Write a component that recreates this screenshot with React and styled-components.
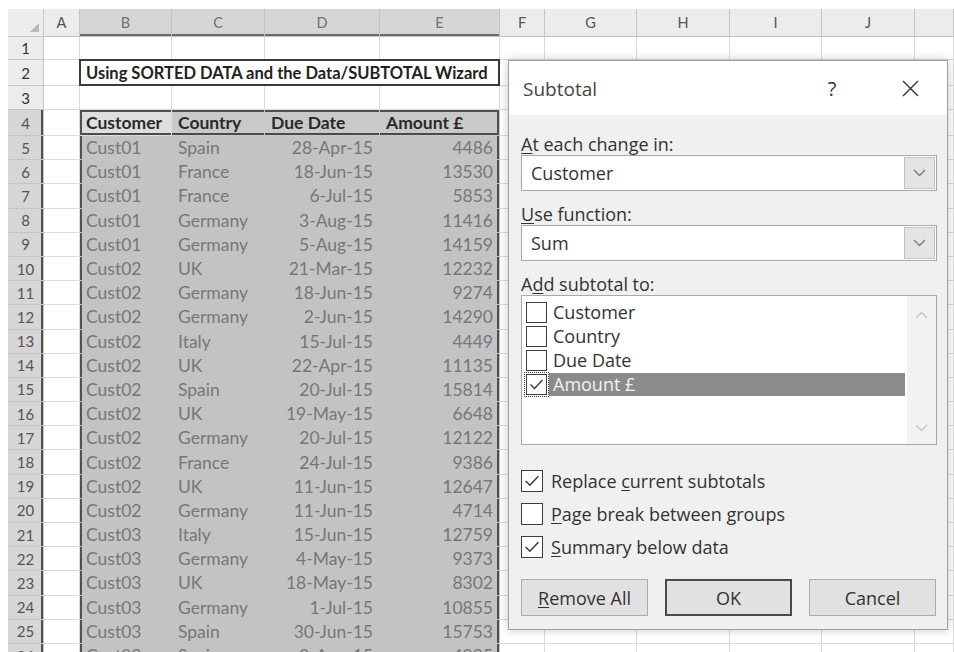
import React from "react";
import styled, { createGlobalStyle } from "styled-components";

const GlobalStyle = createGlobalStyle`
  html, body {
    margin: 0;
    padding: 0;
    background: #fff;
  }
  body {
    width: 954px;
    height: 652px;
    overflow: hidden;
  }
`;

const LETTERS = ["A", "B", "C", "D", "E", "F", "G", "H", "I", "J"];

const ROWS = [
  ["Cust01", "Spain", "28-Apr-15", "4486"],
  ["Cust01", "France", "18-Jun-15", "13530"],
  ["Cust01", "France", "6-Jul-15", "5853"],
  ["Cust01", "Germany", "3-Aug-15", "11416"],
  ["Cust01", "Germany", "5-Aug-15", "14159"],
  ["Cust02", "UK", "21-Mar-15", "12232"],
  ["Cust02", "Germany", "18-Jun-15", "9274"],
  ["Cust02", "Germany", "2-Jun-15", "14290"],
  ["Cust02", "Italy", "15-Jul-15", "4449"],
  ["Cust02", "UK", "22-Apr-15", "11135"],
  ["Cust02", "Spain", "20-Jul-15", "15814"],
  ["Cust02", "UK", "19-May-15", "6648"],
  ["Cust02", "Germany", "20-Jul-15", "12122"],
  ["Cust02", "France", "24-Jul-15", "9386"],
  ["Cust02", "UK", "11-Jun-15", "12647"],
  ["Cust02", "Germany", "11-Jun-15", "4714"],
  ["Cust03", "Italy", "15-Jun-15", "12759"],
  ["Cust03", "Germany", "4-May-15", "9373"],
  ["Cust03", "UK", "18-May-15", "8302"],
  ["Cust03", "Germany", "1-Jul-15", "10855"],
  ["Cust03", "Spain", "30-Jun-15", "15753"],
  ["Cust03", "Spain", "3-Aug-15", "4995"],
];

const HEAD = ["Customer", "Country", "Due Date", "Amount £"];
const EDGE = "#505050";

const Page = styled.div`
  position: relative;
  width: 954px;
  height: 652px;
  overflow: hidden;
  padding: 9px 0 0 8px;
  box-sizing: border-box;
  background: #fff;
`;

const Sheet = styled.div`
  display: grid;
  grid-template-columns: 36px 36px 92px 93px 115px 120px 45px 92px 93px 92px 93px 1fr;
  grid-template-rows: 28px 23px 26px 24px 26px repeat(22, 24.2px);
  font-family: Lato, "Liberation Sans", sans-serif;
`;

const Cell = styled.div`
  box-sizing: border-box;
  border-right: 1px solid #dadada;
  border-bottom: 1px solid #dadada;
  overflow: hidden;
  white-space: nowrap;
`;

const Corner = styled(Cell)`
  background: #ededed;
  border-color: #c8c8c8;
  display: flex;
  align-items: flex-end;
  justify-content: flex-end;
  padding: 0 4px 4px 0;
`;

const ColHead = styled(Cell)`
  background: ${(p) => (p.$sel ? "#d6d6d6" : "#ececec")};
  border-color: #c4c4c4;
  box-shadow: ${(p) => (p.$sel ? `inset 0 -2px 0 #6a6a6a` : "none")};
  color: ${(p) => (p.$sel ? "#707070" : "#555")};
  font-size: 14.5px;
  display: flex;
  align-items: center;
  justify-content: center;
`;

const RowHead = styled(Cell)`
  background: ${(p) => (p.$sel ? "#d6d6d6" : "#ececec")};
  border-color: #c4c4c4;
  box-shadow: ${(p) => (p.$sel ? `inset -2px 0 0 ${EDGE}` : "none")};
  color: ${(p) => (p.$sel ? "#555" : "#333")};
  font-size: 15px;
  display: flex;
  align-items: center;
  justify-content: center;
`;

const TitleCell = styled(Cell)`
  grid-column: span 4;
  border: 2px solid #3a3a3a;
  margin: -1px 0 0 -1px;
  color: #222;
  font-weight: 700;
  font-size: 16.5px;
  display: flex;
  align-items: center;
  padding-left: 5px;
`;

const edgeShadow = (p) => {
  const s = [];
  if (p.$first) s.push(`inset 2px 0 0 ${EDGE}`);
  if (p.$last) s.push(`inset -2px 0 0 ${EDGE}`);
  if (p.$head) s.push(`inset 0 2px 0 ${EDGE}`, `inset 0 -2px 0 #4a4a4a`);
  return s.length ? s.join(", ") : "none";
};

const blockFill = (p) => (p.$active ? "#dedede" : p.$head ? "#c9c9c9" : "#c3c3c3");

const BlockCell = styled(Cell)`
  background: ${blockFill};
  border-color: ${blockFill};
  box-shadow: ${edgeShadow};
  color: ${(p) => (p.$head ? "#2a2a2a" : "#777")};
  font-weight: ${(p) => (p.$head ? 700 : 400)};
  font-size: 17.5px;
  display: flex;
  align-items: center;
  justify-content: ${(p) => (p.$right ? "flex-end" : "flex-start")};
  padding: ${(p) => (p.$right ? "0 6px 0 0" : "0 0 0 6px")};
`;

const Dialog = styled.div`
  position: absolute;
  left: 508px;
  top: 60px;
  width: 440px;
  height: 570px;
  box-sizing: border-box;
  border: 1px solid #a0a0a0;
  background: #f0f0f0;
  box-shadow: 0 0 9px rgba(0, 0, 0, 0.22);
  display: flex;
  flex-direction: column;
  font-family: "Open Sans", "Noto Sans", sans-serif;
  color: #333;
`;

const TitleBar = styled.div`
  height: 54px;
  background: #fff;
  display: flex;
  align-items: center;
  padding-left: 14px;
`;

const Title = styled.div`
  flex: 1;
  font-size: 19px;
  color: #444;
  padding-top: 1px;
`;

const Help = styled.div`
  width: 30px;
  text-align: center;
  font-size: 20px;
  color: #333;
  margin-right: 40px;
`;

const Close = styled.div`
  width: 46px;
  margin-right: 14px;
  display: flex;
  justify-content: center;
`;

const Body = styled.div`
  flex: 1;
  display: flex;
  flex-direction: column;
  padding: 18px 10px 0 12px;
`;

const Label = styled.div`
  font-size: 18px;
  line-height: 22px;
  margin-top: ${(p) => (p.$first ? 0 : 12)}px;
`;

const Key = styled.span`
  text-decoration: underline;
  text-underline-offset: 2px;
`;

const Select = styled.div`
  height: 36px;
  box-sizing: border-box;
  display: flex;
  background: #fff;
  border: 1px solid #a9a9a9;
`;

const SelectValue = styled.div`
  flex: 1;
  padding-left: 9px;
  font-size: 18px;
  line-height: 34px;
`;

const SelectArrow = styled.div`
  width: 29px;
  margin: 1px;
  background: #e4e4e4;
  border: 1px solid #c2c2c2;
  display: flex;
  align-items: center;
  justify-content: center;
`;

const ListBox = styled.div`
  height: 150px;
  box-sizing: border-box;
  background: #fff;
  border: 1px solid #a9a9a9;
  display: flex;
`;

const ListItems = styled.div`
  flex: 1;
  padding: 4px 2px 0 4px;
`;

const ListRow = styled.div`
  height: 24px;
  display: flex;
  align-items: center;
`;

const ItemText = styled.div`
  flex: 1;
  margin-left: 2px;
  padding-left: 4px;
  font-size: 18px;
  line-height: 23px;
  background: ${(p) => (p.$selected ? "#8b8b8b" : "transparent")};
  color: ${(p) => (p.$selected ? "#f2f2f2" : "#333")};
`;

const ScrollTrack = styled.div`
  width: 29px;
  background: #f2f2f2;
  display: flex;
  flex-direction: column;
  justify-content: space-between;
  align-items: center;
  padding: 15px 0 12px;
`;

const Box = styled.span`
  width: ${(p) => p.$size}px;
  height: ${(p) => p.$size}px;
  box-sizing: border-box;
  flex: none;
  background: #fff;
  border: 1px solid #3c3c3c;
  outline: ${(p) => (p.$focus ? "1px dotted #333" : "none")};
  outline-offset: 1px;
  display: flex;
  align-items: center;
  justify-content: center;
`;

const Options = styled.div`
  margin-top: 19px;
  display: flex;
  flex-direction: column;
`;

const OptionRow = styled.div`
  height: 33px;
  display: flex;
  align-items: center;
  gap: 8px;
  font-size: 18px;
`;

const Buttons = styled.div`
  margin-top: 16px;
  display: flex;
  justify-content: space-between;
  padding-right: 1px;
`;

const Button = styled.div`
  width: 127px;
  height: 37px;
  box-sizing: border-box;
  background: #e1e1e1;
  border: ${(p) => (p.$default ? "2px solid #4a4a4a" : "1px solid #adadad")};
  display: flex;
  align-items: center;
  justify-content: center;
  font-size: 18px;
  color: #333;
`;

const Check = ({ on, size = 21, focus }) => (
  <Box $size={size} $focus={focus}>
    {on && (
      <svg width={size - 4} height={size - 4} viewBox="0 0 17 17">
        <path d="M2.5 8.5 L6.5 12.5 L14.5 4" fill="none" stroke="#3a3a3a" strokeWidth="1.4" />
      </svg>
    )}
  </Box>
);

const Chevron = ({ up, color = "#777" }) => (
  <svg width="13" height="8" viewBox="0 0 13 8">
    <path d={up ? "M1 7 L6.5 1.5 L12 7" : "M1 1 L6.5 6.5 L12 1"} fill="none" stroke={color} strokeWidth="1.3" />
  </svg>
);

const plainRow = (r, from) => {
  const out = [];
  for (let c = from; c <= 11; c++) out.push(<Cell key={`${r}-${c}`} />);
  return out;
};

const SubtotalDialog = () => (
  <Dialog>
    <TitleBar>
      <Title>Subtotal</Title>
      <Help>?</Help>
      <Close>
        <svg width="17" height="17" viewBox="0 0 17 17">
          <path d="M1 1 L16 16 M16 1 L1 16" stroke="#333" strokeWidth="1.4" />
        </svg>
      </Close>
    </TitleBar>
    <Body>
      <Label $first>
        <Key>A</Key>t each change in:
      </Label>
      <Select>
        <SelectValue>Customer</SelectValue>
        <SelectArrow>
          <Chevron />
        </SelectArrow>
      </Select>
      <Label>
        <Key>U</Key>se function:
      </Label>
      <Select>
        <SelectValue>Sum</SelectValue>
        <SelectArrow>
          <Chevron />
        </SelectArrow>
      </Select>
      <Label>
        A<Key>d</Key>d subtotal to:
      </Label>
      <ListBox>
        <ListItems>
          {HEAD.map((h, i) => (
            <ListRow key={h}>
              <Check on={i === 3} focus={i === 3} />
              <ItemText $selected={i === 3}>{h}</ItemText>
            </ListRow>
          ))}
        </ListItems>
        <ScrollTrack>
          <Chevron up color="#c4c4c4" />
          <Chevron color="#c4c4c4" />
        </ScrollTrack>
      </ListBox>
      <Options>
        <OptionRow>
          <Check on size={22} />
          <span>
            Replace <Key>c</Key>urrent subtotals
          </span>
        </OptionRow>
        <OptionRow>
          <Check size={22} />
          <span>
            <Key>P</Key>age break between groups
          </span>
        </OptionRow>
        <OptionRow>
          <Check on size={22} />
          <span>
            <Key>S</Key>ummary below data
          </span>
        </OptionRow>
      </Options>
      <Buttons>
        <Button>
          <span>
            <Key>R</Key>emove All
          </span>
        </Button>
        <Button $default>OK</Button>
        <Button>Cancel</Button>
      </Buttons>
    </Body>
  </Dialog>
);

const App = () => {
  const cells = [];

  // column letters
  cells.push(
    <Corner key="corner">
      <svg width="9" height="9" viewBox="0 0 9 9">
        <path d="M9 0 L9 9 L0 9 Z" fill="#b8b8b8" />
      </svg>
    </Corner>
  );
  LETTERS.forEach((l, i) => {
    cells.push(
      <ColHead key={l} $sel={i >= 1 && i <= 4}>
        {l}
      </ColHead>
    );
  });
  cells.push(<ColHead key="rest" />);

  for (let r = 1; r <= 26; r++) {
    cells.push(
      <RowHead key={`h${r}`} $sel={r >= 4}>
        {r}
      </RowHead>
    );
    cells.push(<Cell key={`a${r}`} />);

    if (r === 2) {
      cells.push(
        <TitleCell key="title">Using SORTED DATA and the Data/SUBTOTAL Wizard</TitleCell>
      );
      cells.push(...plainRow(r, 6));
    } else if (r >= 4) {
      const vals = r === 4 ? HEAD : ROWS[r - 5];
      vals.forEach((v, c) => {
        cells.push(
          <BlockCell
            key={`${r}-${c}`}
            $first={c === 0}
            $last={c === 3}
            $head={r === 4}
            $active={r === 4 && c === 0}
            $right={r > 4 && c >= 2}
          >
            {v}
          </BlockCell>
        );
      });
      cells.push(...plainRow(r, 6));
    } else {
      cells.push(...plainRow(r, 2));
    }
  }

  return (
    <>
      <GlobalStyle />
      <Page>
        <Sheet>{cells}</Sheet>
        <SubtotalDialog />
      </Page>
    </>
  );
};

export default App;
